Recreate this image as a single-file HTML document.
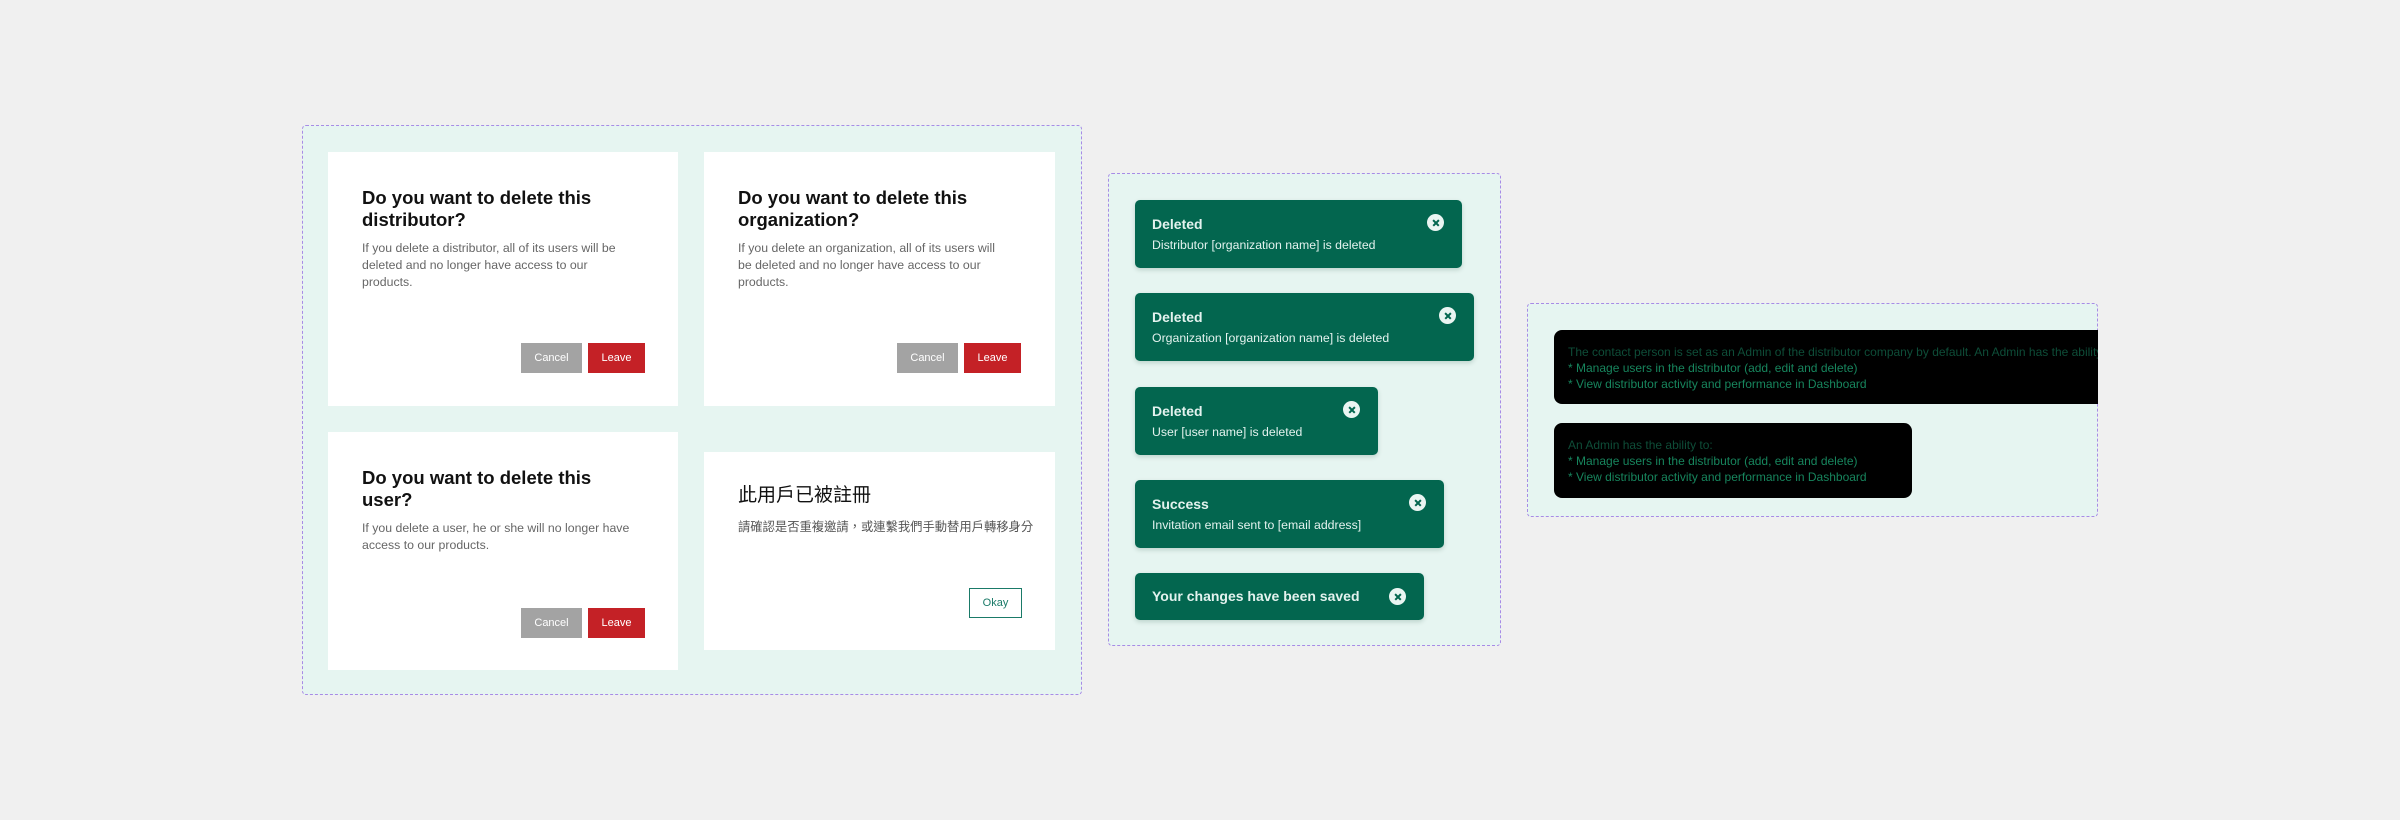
<!DOCTYPE html>
<html><head><meta charset="utf-8"><style>
*{margin:0;padding:0;box-sizing:border-box}
body{width:2400px;height:820px;background:#f0f0f0;position:relative;overflow:hidden;font-family:"Liberation Sans","Noto Sans CJK TC",sans-serif}
.fr{position:absolute;background:#e6f5f1;border:1.5px dashed #a88be6;border-radius:4px}
.card{position:absolute;background:#fff}
.t{position:absolute;left:34px;font-size:18.5px;line-height:22px;color:#111;font-weight:bold;letter-spacing:0}
.b{position:absolute;left:34px;font-size:12.3px;line-height:17px;color:#666;white-space:nowrap}
.btn{position:absolute;height:30px;font-size:11px;color:#fff;display:flex;align-items:center;justify-content:center}
.c{background:#a3a3a3;width:61px}
.l{background:#c42126;width:57px}
.toast{position:absolute;left:1135px;background:#03664f;border-radius:5px;box-shadow:0 2px 5px rgba(0,60,40,.18);color:#e3f2ee}
.tt{position:absolute;left:17px;top:16px;font-size:14px;font-weight:bold}
.ts{position:absolute;left:17px;top:38px;font-size:12.3px}
.x{position:absolute;width:17px;height:17px;border-radius:50%;background:#eaf5f2;top:14px}
.x:before,.x:after{content:"";position:absolute;left:4.5px;top:7.5px;width:8px;height:1.8px;background:#03664f;transform:rotate(45deg)}
.x:after{transform:rotate(-45deg)}
.bk{position:absolute;left:1554px;background:#000;border-radius:8px;font-size:12px;line-height:16px;padding:14px 0 0 14px;white-space:nowrap;overflow:hidden;color:#17855d}
.bk .d{color:#0e4d38}
</style></head><body>
<div class="fr" style="left:302px;top:125px;width:780px;height:570px"></div>
<div class="card" style="left:328px;top:152px;width:350px;height:254px">
<div class="t" style="top:35px">Do you want to delete this<br>distributor?</div>
<div class="b" style="top:88px">If you delete a distributor, all of its users will be<br>deleted and no longer have access to our<br>products.</div>
<div class="btn c" style="left:193px;top:191px">Cancel</div><div class="btn l" style="left:260px;top:191px">Leave</div></div>
<div class="card" style="left:704px;top:152px;width:351px;height:254px">
<div class="t" style="top:35px">Do you want to delete this<br>organization?</div>
<div class="b" style="top:88px">If you delete an organization, all of its users will<br>be deleted and no longer have access to our<br>products.</div>
<div class="btn c" style="left:193px;top:191px">Cancel</div><div class="btn l" style="left:260px;top:191px">Leave</div></div>
<div class="card" style="left:328px;top:432px;width:350px;height:238px">
<div class="t" style="top:35px">Do you want to delete this<br>user?</div>
<div class="b" style="top:88px">If you delete a user, he or she will no longer have<br>access to our products.</div>
<div class="btn c" style="left:193px;top:176px">Cancel</div><div class="btn l" style="left:260px;top:176px">Leave</div></div>
<div class="card" style="left:704px;top:452px;width:351px;height:198px">
<div class="t" style="top:33px;font-weight:normal;font-size:19px">此用戶已被註冊</div>
<div class="b" style="top:67px;font-size:12.3px;color:#555">請確認是否重複邀請，或連繫我們手動替用戶轉移身分</div>
<div style="position:absolute;left:265px;top:136px;width:53px;height:30px;border:1px solid #1a7a68;color:#1a7a68;font-size:11px;display:flex;align-items:center;justify-content:center">Okay</div></div>

<div class="fr" style="left:1108px;top:173px;width:393px;height:473px"></div>
<div class="toast" style="top:200px;width:327px;height:68px"><div class="tt">Deleted</div><div class="ts">Distributor [organization name] is deleted</div><div class="x" style="left:292px"></div></div>
<div class="toast" style="top:293px;width:339px;height:68px"><div class="tt">Deleted</div><div class="ts">Organization [organization name] is deleted</div><div class="x" style="left:304px"></div></div>
<div class="toast" style="top:387px;width:243px;height:68px"><div class="tt">Deleted</div><div class="ts">User [user name] is deleted</div><div class="x" style="left:208px"></div></div>
<div class="toast" style="top:480px;width:309px;height:68px"><div class="tt">Success</div><div class="ts">Invitation email sent to [email address]</div><div class="x" style="left:274px"></div></div>
<div class="toast" style="top:573px;width:289px;height:47px"><div class="tt" style="top:15px;font-size:14px">Your changes have been saved</div><div class="x" style="left:254px;top:15px"></div></div>

<div class="fr" style="left:1527px;top:303px;width:571px;height:214px"></div>
<div class="bk" style="top:330px;width:544px;height:74px;border-radius:8px 0 0 8px"><div class="d">The contact person is set as an Admin of the distributor company by default. An Admin has the ability to:</div><div>* Manage users in the distributor (add, edit and delete)</div><div>* View distributor activity and performance in Dashboard</div></div>
<div class="bk" style="top:423px;width:358px;height:75px"><div class="d">An Admin has the ability to:</div><div>* Manage users in the distributor (add, edit and delete)</div><div>* View distributor activity and performance in Dashboard</div></div>
</body></html>
